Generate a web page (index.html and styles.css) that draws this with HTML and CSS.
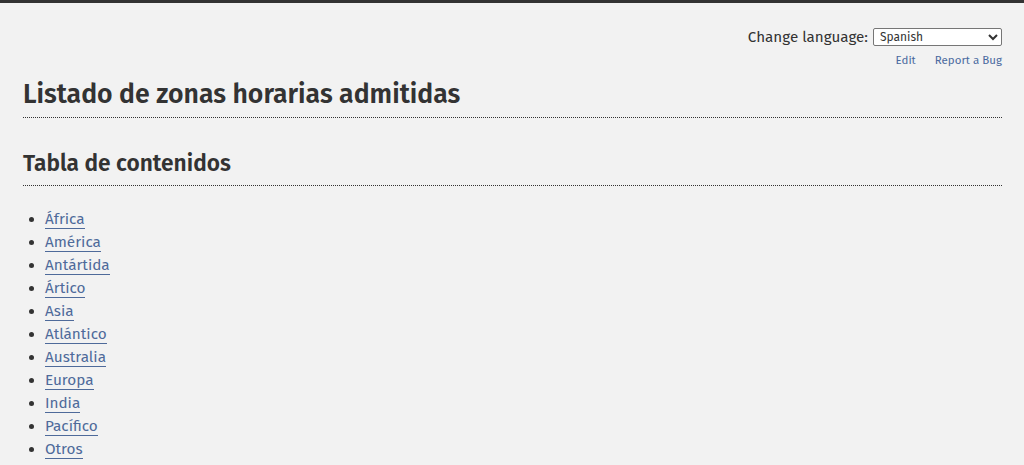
FILE: index.html
```html
<!DOCTYPE html>
<html lang="es">
<head>
<meta charset="utf-8">
<title>Listado de zonas horarias admitidas</title>
<link rel="stylesheet" href="styles.css">
</head>
<body>
<div class="topbar"></div>
<main class="page">
  <div class="tools">
    <div class="lang">
      <label for="lang">Change language:</label>
      <select id="lang" class="lang-select">
        <option>Spanish</option>
      </select>
    </div>
    <div class="links">
      <a href="#">Edit</a>
      <a href="#">Report a Bug</a>
    </div>
  </div>
  <h1 class="title">Listado de zonas horarias admitidas</h1>
  <h2 class="subtitle">Tabla de contenidos</h2>
  <ul class="toc">
    <li><a href="#">África</a></li>
    <li><a href="#">América</a></li>
    <li><a href="#">Antártida</a></li>
    <li><a href="#">Ártico</a></li>
    <li><a href="#">Asia</a></li>
    <li><a href="#">Atlántico</a></li>
    <li><a href="#">Australia</a></li>
    <li><a href="#">Europa</a></li>
    <li><a href="#">India</a></li>
    <li><a href="#">Pacífico</a></li>
    <li><a href="#">Otros</a></li>
  </ul>
</main>
</body>
</html>
```
FILE: styles.css
```css
html, body {
  margin: 0;
  padding: 0;
}
body {
  background: #f2f2f2;
  color: #333;
  font-family: "Fira Sans", Lato, "Noto Sans", sans-serif;
  font-size: 15.3px;
}
.topbar {
  height: 3px;
  background: #333;
}
.page {
  padding: 0 22px 0 23px;
}
.tools {
  display: flex;
  flex-direction: column;
  align-items: flex-end;
  padding-top: 25px;
}
.lang {
  display: flex;
  align-items: center;
  gap: 5px;
  font-size: 15.2px;
  color: #333;
}
.lang-select {
  width: 129px;
  height: 18px;
  font-size: 12px;
  font-family: inherit;
  padding: 0 2px;
  border: 1px solid #767676;
  border-radius: 2px;
  background: #fff;
  color: #333;
}
.links {
  display: flex;
  gap: 19px;
  margin-top: 7px;
  font-size: 11.5px;
}
.links a {
  color: #4a6a9f;
  text-decoration: none;
}
.title {
  margin: 10px 0 0;
  padding-bottom: 5px;
  font-size: 26.6px;
  font-weight: 600;
  color: #333;
  border-bottom: 1px dotted #333;
  line-height: 1.3;
}
.subtitle {
  margin: 31px 0 0;
  padding-bottom: 7px;
  font-size: 22.7px;
  font-weight: 600;
  color: #333;
  border-bottom: 1px dotted #333;
  line-height: 1.3;
}
.toc {
  margin: 22px 0 0;
  padding-left: 22px;
  line-height: 23px;
}
.toc a {
  color: #4e6a9a;
  text-decoration: none;
  border-bottom: 1px solid #4e6a9a;
}
```
